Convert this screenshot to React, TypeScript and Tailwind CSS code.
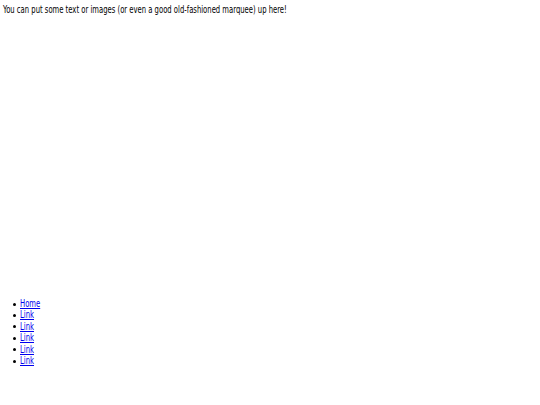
const links = ["Home", "Link", "Link", "Link", "Link", "Link"];

export default function App() {
  return (
    <div className="w-[540px] h-[405px] bg-white text-black" style={{ fontFamily: '"DejaVu Sans Condensed", "DejaVu Sans", sans-serif' }}>
      <div className="h-[298px] px-[3px] pt-[4px] text-[10px] leading-[12px]">
        <span className="inline-block whitespace-nowrap origin-left scale-x-[0.76]">
          You can put some text or images (or even a good old-fashioned marquee) up here!
        </span>
      </div>
      <ul className="list-none text-[10px] leading-[11.4px]">
        {links.map((l, i) => (
          <li key={i} className="flex items-center h-[11.4px]">
            <span className="ml-[13px] mt-[1px] w-[3px] h-[3px] rounded-full bg-black" />
            <a href="#" className="ml-[4px] inline-block whitespace-nowrap origin-left scale-x-[0.76] text-[#0000ee] underline">{l}</a>
          </li>
        ))}
      </ul>
    </div>
  );
}
